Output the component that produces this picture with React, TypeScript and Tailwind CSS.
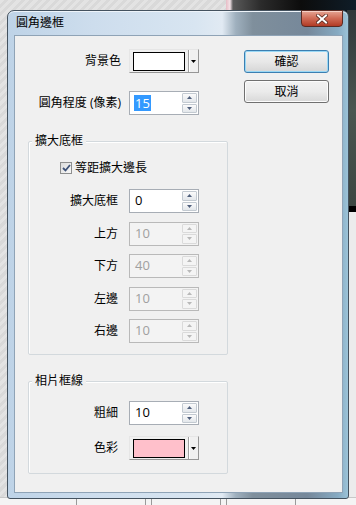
import React from 'react';

const SpinButtons = ({ disabled }: { disabled?: boolean }) => (
  <div className="flex flex-col w-[15px] py-px gap-px">
    {['up', 'down'].map(d => (
      <div
        key={d}
        className={`flex-1 flex items-center justify-center border rounded-[1px] ${
          disabled ? 'border-[#dadada] bg-[#f4f4f4]' : 'border-[#c3cad1] bg-gradient-to-b from-[#fbfbfb] to-[#e3e7eb]'
        }`}
      >
        <svg width="5" height="3" viewBox="0 0 5 3">
          <path d={d === 'up' ? 'M2.5 0L5 3H0Z' : 'M0 0H5L2.5 3Z'} fill={disabled ? '#b8b8b8' : '#4f5f7c'} />
        </svg>
      </div>
    ))}
  </div>
);

const Spinner = ({ value, disabled, selected }: { value: string; disabled?: boolean; selected?: boolean }) => (
  <div
    className={`w-[70px] h-[24px] flex items-stretch border pl-[4px] pr-px ${
      disabled ? 'border-[#b9b9b9] bg-[#f3f3f3] text-[#a0a0a0]' : 'border-[#a7adb5] bg-white text-black'
    }`}
  >
    <div className="flex-1 flex items-center text-[13px]">
      {selected ? <span className="bg-[#3399ff] text-white leading-[16px] px-px">{value}</span> : <span className="px-px">{value}</span>}
    </div>
    <SpinButtons disabled={disabled} />
  </div>
);

const ColorPicker = ({ swatch }: { swatch: string }) => (
  <div className="w-[70px] h-[24px] flex items-center border border-t-[#e6e6e6] border-l-[#e6e6e6] border-r-[#969696] border-b-[#969696] bg-[#f0f0f0] pl-[3px]">
    <div className={`w-[52px] h-[19px] border border-black ${swatch}`} />
    <div className="ml-[3px] w-[2px] h-[22px] border-l border-[#a0a0a0] bg-white" />
    <svg width="5" height="3" viewBox="0 0 5 3" className="ml-[1px]">
      <path d="M0 0H5L2.5 3Z" fill="#000" />
    </svg>
  </div>
);

const Row = ({ label, children }: { label: string; children: React.ReactNode }) => (
  <div className="flex items-center h-[24px]">
    <div className="w-[89px] text-right">{label}</div>
    <div className="ml-[11px]">{children}</div>
  </div>
);

const GroupBox = ({ title, className, children }: { title: string; className: string; children: React.ReactNode }) => (
  <div className={`relative border border-[#d3d9dd] rounded-[2px] shadow-[inset_1px_1px_0_#fff] ${className}`}>
    <span className="absolute left-[3px] top-[-9px] bg-[#f0f0f0] px-[3px] leading-[16px]">{title}</span>
    {children}
  </div>
);

const Button = ({ label, primary }: { label: string; primary?: boolean }) => (
  <div
    className={`h-[23px] flex items-center justify-center rounded-[3px] border ${
      primary
        ? 'border-[#3c7fb1] shadow-[inset_0_0_0_1px_#9ad8f5] bg-gradient-to-b from-[#f2f2f2] via-[#e8e8e8] to-[#d6d6d6]'
        : 'border-[#707070] shadow-[inset_0_0_0_1px_#fcfcfc] bg-gradient-to-b from-[#f2f2f2] via-[#ebebeb] to-[#d8d8d8]'
    }`}
  >
    {label}
  </div>
);

export default function App() {
  return (
    <div className="relative w-[356px] h-[505px] overflow-hidden bg-[repeating-linear-gradient(135deg,#e3e3e3_0px,#e3e3e3_3px,#d9d9d9_3px,#d9d9d9_6px)] font-[family-name:'Open_Sans','Noto_Sans_CJK_TC',sans-serif] text-[12px] text-black">
      {/* desktop behind the dialog */}
      <div className="absolute left-[226px] top-0 w-[130px] h-[12px] bg-[linear-gradient(to_right,#e7bcc6_0px,#f3e3e7_4px,#5a5a5a_7px,#2b2b2b_35px,#0c0c0c_75px,#0f1d28_130px)]" />
      <div className="absolute left-[347px] top-[10px] w-[9px] h-[200px] bg-gradient-to-b from-[#30383a] via-[#4a5650] to-[#3b4641]" />
      <div className="absolute left-[347px] top-[206px] w-[9px] h-[6px] bg-black" />
      <div className="absolute left-[347px] top-[212px] w-[9px] h-[293px] bg-[#ececec] border-l border-[#bcbcbc]" />
      <div className="absolute left-0 top-[497px] w-[356px] h-[8px] bg-[#f4f4f4] border-t border-[#c8c8c8]" />
      <div className="absolute left-[76px] top-[497px] w-[70px] h-[8px] border-x border-[#9a9a9a]" />
      <div className="absolute left-[151px] top-[497px] w-[70px] h-[8px] border-x border-[#9a9a9a]" />
      <div className="absolute left-[226px] top-[497px] w-[70px] h-[8px] border-x border-[#9a9a9a]" />

      {/* dialog window */}
      <div className="absolute left-[7px] top-[10px] w-[342px] h-[489px] flex flex-col rounded-t-[7px] rounded-b-[3px] border border-[#44525f] bg-[linear-gradient(to_right,#bed3e7_0%,#cddded_25%,#d8e5f1_55%,#e1eaf3_63%,#9fb0be_67%,#7f8f9c_72%,#76889a_88%,#86aac2_97%,#9cc3d8_100%)] shadow-[inset_0_1px_0_#eef4fa]">
        <div className="relative h-[24px] flex items-center pl-[8px]">
          <span>圓角邊框</span>
          <div className="absolute right-[5px] top-[-1px] w-[42px] h-[17px] rounded-b-[4px] border border-[#5b2a22] bg-gradient-to-b from-[#e5a594] via-[#cf6a55] to-[#b13a24] shadow-[inset_0_1px_0_#f5d0c6] flex items-center justify-center">
            <svg width="12" height="10" viewBox="0 0 12 10">
              <path d="M2 1.5L10 8.5M10 1.5L2 8.5" stroke="#5a2a20" strokeWidth="3.6" strokeLinecap="square" />
              <path d="M2 1.5L10 8.5M10 1.5L2 8.5" stroke="#fff" strokeWidth="2" strokeLinecap="square" />
            </svg>
          </div>
        </div>

        <div className="flex-1 ml-[6px] mr-[5px] mb-[5px] border border-[#8fa3b6] bg-[#f0f0f0] flex">
          {/* left column */}
          <div className="ml-[13px] w-[200px] flex flex-col">
            <div className="mt-[13px] flex items-center h-[24px]">
              <div className="w-[93px] text-right">背景色</div>
              <div className="ml-[8px]">
                <ColorPicker swatch="bg-white" />
              </div>
            </div>
            <div className="mt-[18px] flex items-center h-[24px]">
              <div className="w-[93px] text-right">圓角程度 (像素)</div>
              <div className="ml-[8px]">
                <Spinner value="15" selected />
              </div>
            </div>

            <GroupBox title="擴大底框" className="mt-[26px] h-[214px] flex flex-col">
              <div className="mt-[19px] ml-[31px] flex items-center h-[13px]">
                <div className="w-[12px] h-[12px] border border-[#8e8f8f] bg-gradient-to-br from-[#dcdcdc] to-[#f8f8f8] flex items-center justify-center">
                  <svg width="9" height="8" viewBox="0 0 9 8">
                    <path d="M1 4L3.5 6.5L8 1" fill="none" stroke="#3e5278" strokeWidth="1.8" />
                  </svg>
                </div>
                <span className="ml-[3px]">等距擴大邊長</span>
              </div>
              <div className="mt-[15px] flex flex-col gap-[8.5px]">
                <Row label="擴大底框">
                  <Spinner value="0" />
                </Row>
                <Row label="上方">
                  <Spinner value="10" disabled />
                </Row>
                <Row label="下方">
                  <Spinner value="40" disabled />
                </Row>
                <Row label="左邊">
                  <Spinner value="10" disabled />
                </Row>
                <Row label="右邊">
                  <Spinner value="10" disabled />
                </Row>
              </div>
            </GroupBox>

            <GroupBox title="相片框線" className="mt-[26px] h-[93px] flex flex-col">
              <div className="mt-[19px] flex flex-col gap-[11px]">
                <Row label="粗細">
                  <Spinner value="10" />
                </Row>
                <Row label="色彩">
                  <ColorPicker swatch="bg-[#ffc0cb]" />
                </Row>
              </div>
            </GroupBox>
          </div>

          {/* buttons */}
          <div className="ml-[16px] mt-[14px] w-[85px] flex flex-col gap-[7px]">
            <Button label="確認" primary />
            <Button label="取消" />
          </div>
        </div>
      </div>
    </div>
  );
}
